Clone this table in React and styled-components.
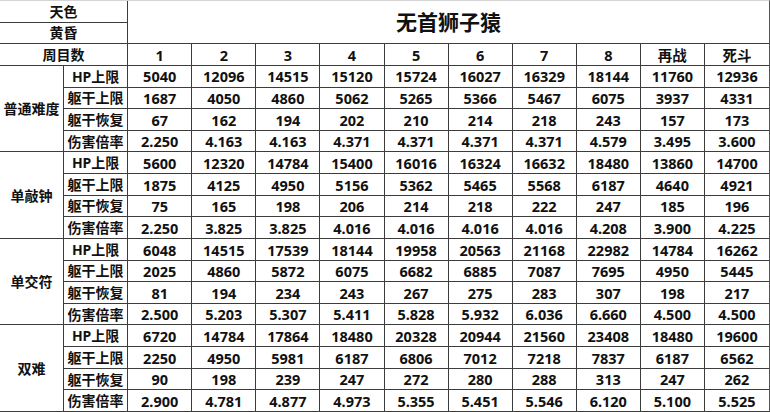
import styled, { createGlobalStyle } from 'styled-components';

const GlobalStyle = createGlobalStyle`
  html, body {
    margin: 0;
    padding: 0;
    background: #ffffff;
  }
  body {
    font-family: "Noto Sans", "Noto Sans CJK SC", sans-serif;
    color: #111;
  }
`;

const Sheet = styled.div`
  box-sizing: border-box;
  width: 770px;
  height: 412px;
  display: grid;
  grid-template-columns: repeat(12, 1fr);
  grid-template-rows: repeat(19, 1fr);
  border-top: 1px solid #d4d4d4;
  border-right: 1px solid #555;
  background: #fff;
`;

const Cell = styled.div`
  box-sizing: border-box;
  grid-column: ${p => p.col} / span ${p => p.colSpan || 1};
  grid-row: ${p => p.row} / span ${p => p.rowSpan || 1};
  display: flex;
  align-items: center;
  justify-content: center;
  padding-top: 1px;
  border-bottom: 1px solid #3c3c3c;
  border-right: ${p => (p.last ? 'none' : '1px solid #3c3c3c')};
  font-weight: 700;
  font-size: ${p => (p.big ? '21px' : p.num ? '14.5px' : '14px')};
  line-height: 1;
  white-space: nowrap;
  overflow: hidden;
`;

const laps = ['1', '2', '3', '4', '5', '6', '7', '8', '再战', '死斗'];

const stats = ['HP上限', '躯干上限', '躯干恢复', '伤害倍率'];

const groups = [
  {
    name: '普通难度',
    rows: [
      ['5040', '12096', '14515', '15120', '15724', '16027', '16329', '18144', '11760', '12936'],
      ['1687', '4050', '4860', '5062', '5265', '5366', '5467', '6075', '3937', '4331'],
      ['67', '162', '194', '202', '210', '214', '218', '243', '157', '173'],
      ['2.250', '4.163', '4.163', '4.371', '4.371', '4.371', '4.371', '4.579', '3.495', '3.600'],
    ],
  },
  {
    name: '单敲钟',
    rows: [
      ['5600', '12320', '14784', '15400', '16016', '16324', '16632', '18480', '13860', '14700'],
      ['1875', '4125', '4950', '5156', '5362', '5465', '5568', '6187', '4640', '4921'],
      ['75', '165', '198', '206', '214', '218', '222', '247', '185', '196'],
      ['2.250', '3.825', '3.825', '4.016', '4.016', '4.016', '4.016', '4.208', '3.900', '4.225'],
    ],
  },
  {
    name: '单交符',
    rows: [
      ['6048', '14515', '17539', '18144', '19958', '20563', '21168', '22982', '14784', '16262'],
      ['2025', '4860', '5872', '6075', '6682', '6885', '7087', '7695', '4950', '5445'],
      ['81', '194', '234', '243', '267', '275', '283', '307', '198', '217'],
      ['2.500', '5.203', '5.307', '5.411', '5.828', '5.932', '6.036', '6.660', '4.500', '4.500'],
    ],
  },
  {
    name: '双难',
    rows: [
      ['6720', '14784', '17864', '18480', '20328', '20944', '21560', '23408', '18480', '19600'],
      ['2250', '4950', '5981', '6187', '6806', '7012', '7218', '7837', '6187', '6562'],
      ['90', '198', '239', '247', '272', '280', '288', '313', '247', '262'],
      ['2.900', '4.781', '4.877', '4.973', '5.355', '5.451', '5.546', '6.120', '5.100', '5.525'],
    ],
  },
];

const App = () => {
  return (
    <>
      <GlobalStyle />
      <Sheet>
        <Cell col={1} colSpan={2} row={1}>天色</Cell>
        <Cell col={1} colSpan={2} row={2}>黄昏</Cell>
        <Cell col={3} colSpan={10} row={1} rowSpan={2} big last>无首狮子猿</Cell>

        <Cell col={1} colSpan={2} row={3}>周目数</Cell>
        {laps.map((lap, i) => (
          <Cell key={lap} col={i + 3} row={3} num last={i === laps.length - 1}>
            {lap}
          </Cell>
        ))}

        {groups.map((group, g) => {
          const top = 4 + g * 4;
          return [
            <Cell key={group.name} col={1} row={top} rowSpan={4}>
              {group.name}
            </Cell>,
            ...group.rows.map((values, r) => [
              <Cell key={`${g}-${r}-label`} col={2} row={top + r}>
                {stats[r]}
              </Cell>,
              ...values.map((v, c) => (
                <Cell
                  key={`${g}-${r}-${c}`}
                  col={c + 3}
                  row={top + r}
                  num
                  last={c === values.length - 1}
                >
                  {v}
                </Cell>
              )),
            ]),
          ];
        })}
      </Sheet>
    </>
  );
};

export default App;
